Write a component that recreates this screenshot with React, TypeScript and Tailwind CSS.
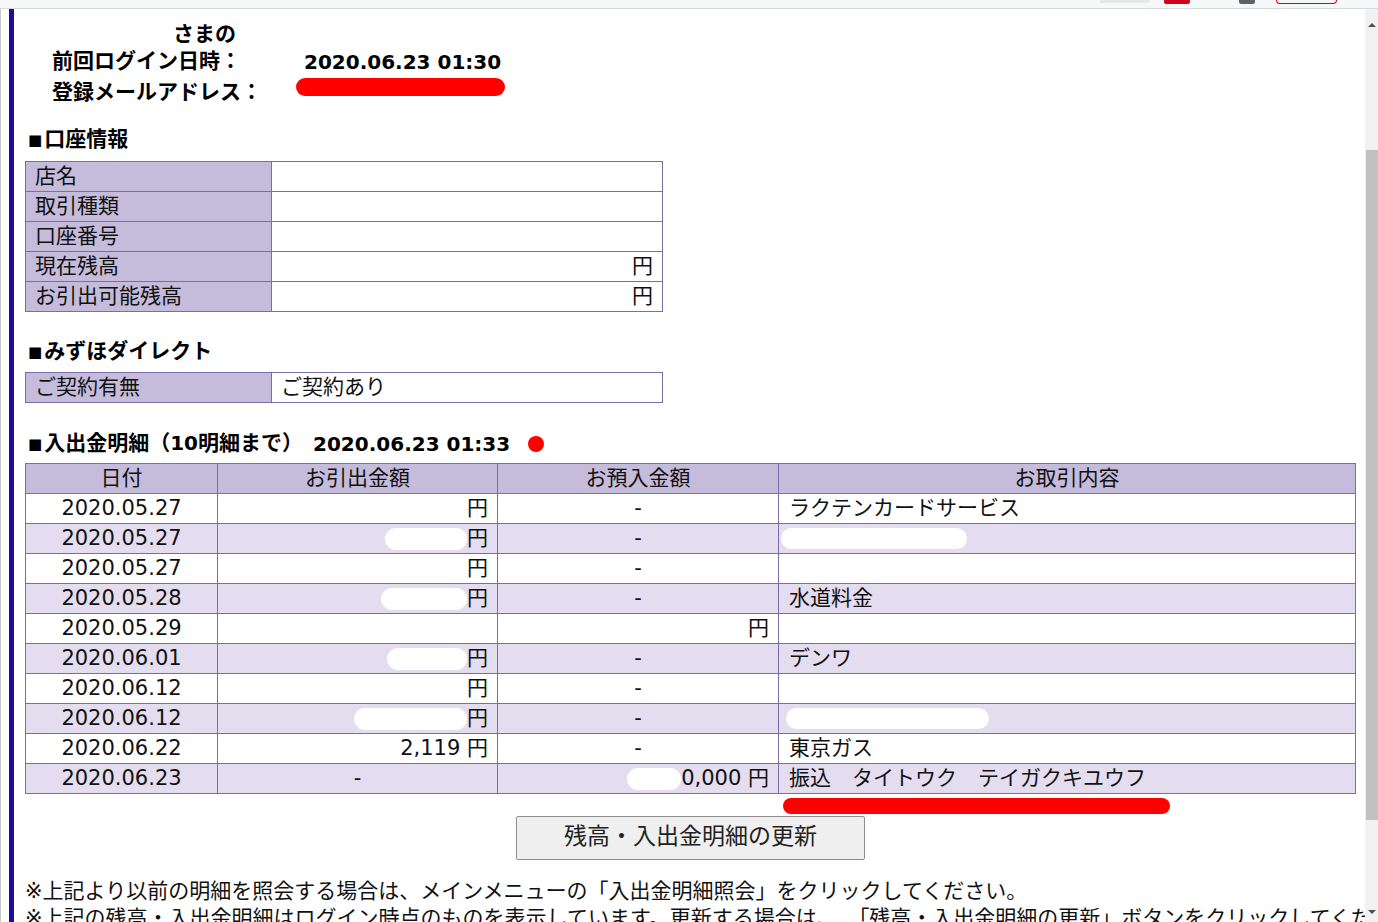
import React from 'react';

// Account summary page (口座情報 / 入出金明細)

type Align = 'left' | 'center' | 'right';

type Tx = {
  date: string;
  out: React.ReactNode;
  inn: React.ReactNode;
  memo: React.ReactNode;
};

const Blob = ({ w, h = 22 }: { w: number; h?: number }) => (
  <span className="inline-block shrink-0 rounded-full bg-white" style={{ width: w, height: h }} />
);

const Yen = ({ blob, amount }: { blob?: number; amount?: string }) => (
  <span className="flex flex-1 items-center justify-end pr-[9px]">
    {blob ? <Blob w={blob} /> : null}
    {amount ? <span>{amount}&nbsp;</span> : null}
    <span>円</span>
  </span>
);

const txs: Tx[] = [
  { date: '2020.05.27', out: <Yen />, inn: '-', memo: 'ラクテンカードサービス' },
  { date: '2020.05.27', out: <Yen blob={82} />, inn: '-', memo: <span className="-ml-[8px] flex"><Blob w={186} h={21} /></span> },
  { date: '2020.05.27', out: <Yen />, inn: '-', memo: '' },
  { date: '2020.05.28', out: <Yen blob={86} />, inn: '-', memo: '水道料金' },
  { date: '2020.05.29', out: '', inn: <Yen />, memo: '' },
  { date: '2020.06.01', out: <Yen blob={80} />, inn: '-', memo: 'デンワ' },
  { date: '2020.06.12', out: <Yen />, inn: '-', memo: '' },
  { date: '2020.06.12', out: <Yen blob={113} />, inn: '-', memo: <span className="-ml-[3px] flex"><Blob w={203} h={21} /></span> },
  { date: '2020.06.22', out: <Yen amount="2,119" />, inn: '-', memo: '東京ガス' },
  { date: '2020.06.23', out: '-', inn: <Yen blob={54} amount="0,000" />, memo: '振込　タイトウク　テイガクキユウフ' },
];

const Cell = ({
  children,
  align = 'left',
  className = '',
  head = false,
}: {
  children?: React.ReactNode;
  align?: Align;
  className?: string;
  head?: boolean;
}) => {
  const justify = align === 'center' ? 'justify-center' : align === 'right' ? 'justify-end' : 'justify-start';
  const Tag = head ? 'th' : 'td';
  return (
    <Tag className={`border border-[#7b6cab] h-[30px] p-0 font-normal ${className}`}>
      <div className={`h-[29px] flex items-center leading-none whitespace-nowrap ${justify}`}>{children}</div>
    </Tag>
  );
};

const Square = () => <span className="text-[15px] mr-[2px]">■</span>;

const SectionTitle = ({ children }: { children: React.ReactNode }) => (
  <div className="h-[28px] flex items-center text-[21px] font-bold text-black pl-[3px]">{children}</div>
);

export default function App() {
  return (
    <div className="w-[1378px] h-[922px] overflow-hidden flex flex-col bg-white text-[#111] font-['DejaVu_Sans','Noto_Sans_CJK_JP',sans-serif]">
      {/* browser chrome remnant */}
      <div className="h-[9px] shrink-0 bg-[#f6f7f8] border-b border-[#d8d8d8] flex items-start">
        <div className="ml-[1100px] w-[50px] h-[3px] rounded-br-full bg-[#e6e7e9]" />
        <div className="ml-[14px] w-[26px] h-[4px] rounded-b-[2px] bg-[#d0021b]" />
        <div className="ml-[49px] w-[16px] h-[4px] rounded-b-[2px] bg-[#5f6368]" />
        <div className="ml-[21px] w-[61px] h-[4px] rounded-b-full border-b border-x border-[#d0021b]" />
      </div>

      <div className="flex-1 flex min-h-0">
        <div className="flex-1 flex min-w-0 border-l border-[#c9c9c9]">
          <div className="w-[8px] shrink-0" />
          <div className="w-[5px] shrink-0 bg-[#1e0b99]" />
          <div className="flex-1 min-w-0 overflow-hidden pl-[11px] pt-[13px]">
            {/* login info */}
            <div className="text-[21px] font-bold text-black">
              <div className="h-[26px] flex items-center pl-[148px]">さまの</div>
              <div className="h-[28px] flex items-center pl-[27px]">
                <span className="w-[252px]">前回ログイン日時：</span>
                <span className="text-[20px]">2020.06.23 01:30</span>
              </div>
              <div className="h-[34px] flex items-center pl-[27px]">
                <span className="w-[244px]">登録メールアドレス：</span>
                <span className="self-start mt-[2px] w-[209px] h-[18px] rounded-full bg-[#ff0000]" />
              </div>
            </div>

            <div className="mt-[16px]">
              <SectionTitle><Square />口座情報</SectionTitle>
            </div>
            <table className="mt-[7px] border-collapse text-[21px] w-[638px] table-fixed">
              <colgroup>
                <col className="w-[246px]" />
                <col />
              </colgroup>
              <tbody>
                {['店名', '取引種類', '口座番号', '現在残高', 'お引出可能残高'].map((label, i) => (
                  <tr key={label}>
                    <Cell className="bg-[#c5bbdb] pl-[9px]">{label}</Cell>
                    <Cell className="bg-white">{i >= 3 ? <Yen /> : null}</Cell>
                  </tr>
                ))}
              </tbody>
            </table>

            <div className="mt-[26px]">
              <SectionTitle><Square />みずほダイレクト</SectionTitle>
            </div>
            <table className="mt-[6px] border-collapse text-[21px] w-[638px] table-fixed">
              <colgroup>
                <col className="w-[246px]" />
                <col />
              </colgroup>
              <tbody>
                <tr>
                  <Cell className="bg-[#c5bbdb] pl-[9px]">ご契約有無</Cell>
                  <Cell className="bg-white pl-[9px]">ご契約あり</Cell>
                </tr>
              </tbody>
            </table>

            <div className="mt-[27px]">
              <SectionTitle>
                <Square />
                <span>入出金明細（<span className="text-[20px]">10</span>明細まで）</span>
                <span className="ml-[10px] text-[20px]">2020.06.23 01:33</span>
                <span className="ml-[18px] w-[16px] h-[16px] rounded-full bg-[#ff0000]" />
              </SectionTitle>
            </div>
            <table className="mt-[5px] border-collapse text-[21px] w-[1331px] table-fixed">
              <colgroup>
                <col className="w-[192px]" />
                <col className="w-[280px]" />
                <col className="w-[281px]" />
                <col />
              </colgroup>
              <thead>
                <tr className="bg-[#c5bbdb]">
                  <Cell head align="center">日付</Cell>
                  <Cell head align="center">お引出金額</Cell>
                  <Cell head align="center">お預入金額</Cell>
                  <Cell head align="center">お取引内容</Cell>
                </tr>
              </thead>
              <tbody>
                {txs.map((t, i) => (
                  <tr key={i} className={i % 2 === 1 ? 'bg-[#e4ddf0]' : 'bg-white'}>
                    <Cell align="center">{t.date}</Cell>
                    <Cell align="center">{t.out}</Cell>
                    <Cell align="center">{t.inn}</Cell>
                    <Cell className="pl-[10px]">{t.memo}</Cell>
                  </tr>
                ))}
              </tbody>
            </table>

            <div className="mt-[4px] ml-[758px] w-[387px] h-[16px] rounded-full bg-[#ff0000]" />

            <div className="w-[1331px] flex justify-center mt-[2px]">
              <button className="w-[349px] h-[44px] pb-[3px] bg-[#efefef] border border-[#8f8f8f] rounded-[2px] text-[23px] text-[#222]">
                残高・入出金明細の更新
              </button>
            </div>

            <div className="mt-[18px] text-[21px] whitespace-nowrap leading-[26px]">
              <div className="h-[26px]">
                ※上記より以前の明細を照会する場合は、メインメニューの「入出金明細照会」をクリックしてください。
              </div>
              <div className="h-[28px] pt-[1px]">
                ※上記の残高・入出金明細はログイン時点のものを表示しています。更新する場合は、{'\u2002'}「残高・入出金明細の更新」ボタンをクリックしてください。
              </div>
            </div>
          </div>
        </div>

        {/* scrollbar */}
        <div className="w-[13px] shrink-0 bg-[#f1f1f1] flex flex-col items-center">
          <div className="h-[18px] flex items-end justify-center">
            <span className="w-0 h-0 border-x-[4px] border-x-transparent border-b-[4px] border-b-[#505050]" />
          </div>
          <div className="mt-[123px] w-[12px] ml-[1px] h-[670px] bg-[#c1c1c1]" />
          <div className="flex-1" />
          <div className="h-[12px] flex items-start justify-center">
            <span className="w-0 h-0 border-x-[4px] border-x-transparent border-t-[4px] border-t-[#505050]" />
          </div>
        </div>
      </div>
    </div>
  );
}
